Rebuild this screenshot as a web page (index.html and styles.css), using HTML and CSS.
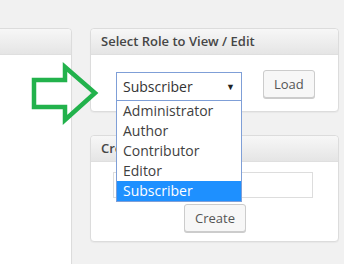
FILE: index.html
```html
<!DOCTYPE html>
<html lang="en">
<head>
<meta charset="UTF-8" />
<meta name="viewport" content="width=device-width, initial-scale=1" />
<title>Roles</title>
<link rel="stylesheet" href="styles.css">
</head>
<body>
<div class="page">
  <div class="col-left">
    <div class="box box-tall">
      <div class="box-head">&nbsp;</div>
      <div class="box-body"></div>
    </div>
  </div>
  <div class="col-right">
    <div class="box">
      <div class="box-head">Select Role to View / Edit</div>
      <div class="box-body role-row">
        <div class="select-wrap">
          <div class="select">Subscriber<span class="caret">&#9660;</span></div>
          <ul class="options">
            <li>Administrator</li>
            <li>Author</li>
            <li>Contributor</li>
            <li>Editor</li>
            <li class="selected">Subscriber</li>
          </ul>
        </div>
        <button class="btn">Load</button>
      </div>
    </div>
    <div class="box">
      <div class="box-head">Create New Role</div>
      <div class="box-body create-body">
        <input class="field" type="text" />
        <button class="btn">Create</button>
      </div>
    </div>
    <div class="box box-next">
      <div class="box-head">&nbsp;</div>
    </div>
  </div>
</div>

<svg class="arrow" width="70" height="64" viewBox="30 62 70 64">
  <polygon points="34,80 65,80 65,67 95,93 65,120 65,107 34,107" fill="none" stroke="#22b24c" stroke-width="4.5" stroke-linejoin="miter"/>
</svg>
</body>
</html>
```

FILE: styles.css
```css
body {
  margin: 0;
  background-color: #f1f1f1;
  font-family: "Open Sans", "Liberation Sans", sans-serif;
  color: #444;
  overflow: hidden;
  height: 264px;
}
.page {
  display: flex;
  gap: 18px;
  padding-top: 28px;
}
.col-left {
  width: 80px;
  margin-left: -8px;
}
.col-right {
  width: 249px;
  display: flex;
  flex-direction: column;
  gap: 23px;
}
.box {
  background-color: #fff;
  border: 1px solid #dcdcdc;
  border-radius: 4px;
  box-shadow: 0 1px 1px rgba(0,0,0,0.04);
}
.box-tall {
  height: 400px;
}
.box-head {
  height: 25px;
  line-height: 25px;
  padding-left: 10px;
  font-size: 13px;
  font-weight: 600;
  color: #464646;
  background: linear-gradient(#f7f7f7, #e5e5e5);
  border-bottom: 1px solid #dfdfdf;
  border-radius: 4px 4px 0 0;
}
.role-row {
  display: flex;
  align-items: flex-start;
  gap: 21px;
  padding: 17px 0 10px 25px;
}
.select-wrap {
  position: relative;
  width: 126px;
}
.select {
  height: 27px;
  line-height: 27px;
  border: 1px solid #7f9fd7;
  padding-left: 6px;
  font-size: 14px;
  color: #333;
  position: relative;
}
.caret {
  position: absolute;
  right: 6px;
  top: 0;
  font-size: 9px;
  color: #222;
}
.options {
  position: absolute;
  top: 29px;
  left: 0;
  right: 0;
  margin: 0;
  padding: 0;
  list-style: none;
  background-color: #fff;
  border: 1px solid #7f9fd7;
  border-top: none;
  z-index: 5;
}
.options li {
  height: 20px;
  line-height: 20px;
  padding-left: 6px;
  font-size: 14px;
  color: #3f3f3f;
}
.options li.selected {
  background-color: #1e90ff;
  color: #fff;
}
.btn {
  font-family: "Open Sans", "Liberation Sans", sans-serif;
  font-size: 13px;
  color: #555;
  background-color: #f7f7f7;
  border: 1px solid #cccccc;
  border-radius: 3px;
  box-shadow: 0 1px 0 #ccc;
  height: 28px;
  padding: 0 10px;
  margin-top: -2px;
}
.create-body {
  display: flex;
  flex-direction: column;
  align-items: flex-start;
  padding: 10px 0 9px 22px;
}
.field {
  width: 200px;
  height: 26px;
  box-sizing: border-box;
  border: 1px solid #ddd;
  margin: 0 0 6px 0;
}
.create-body .btn {
  margin-left: 71px;
  margin-top: 0;
}
.box-next {
  height: 30px;
}
.arrow {
  position: absolute;
  left: 30px;
  top: 62px;
}
```
